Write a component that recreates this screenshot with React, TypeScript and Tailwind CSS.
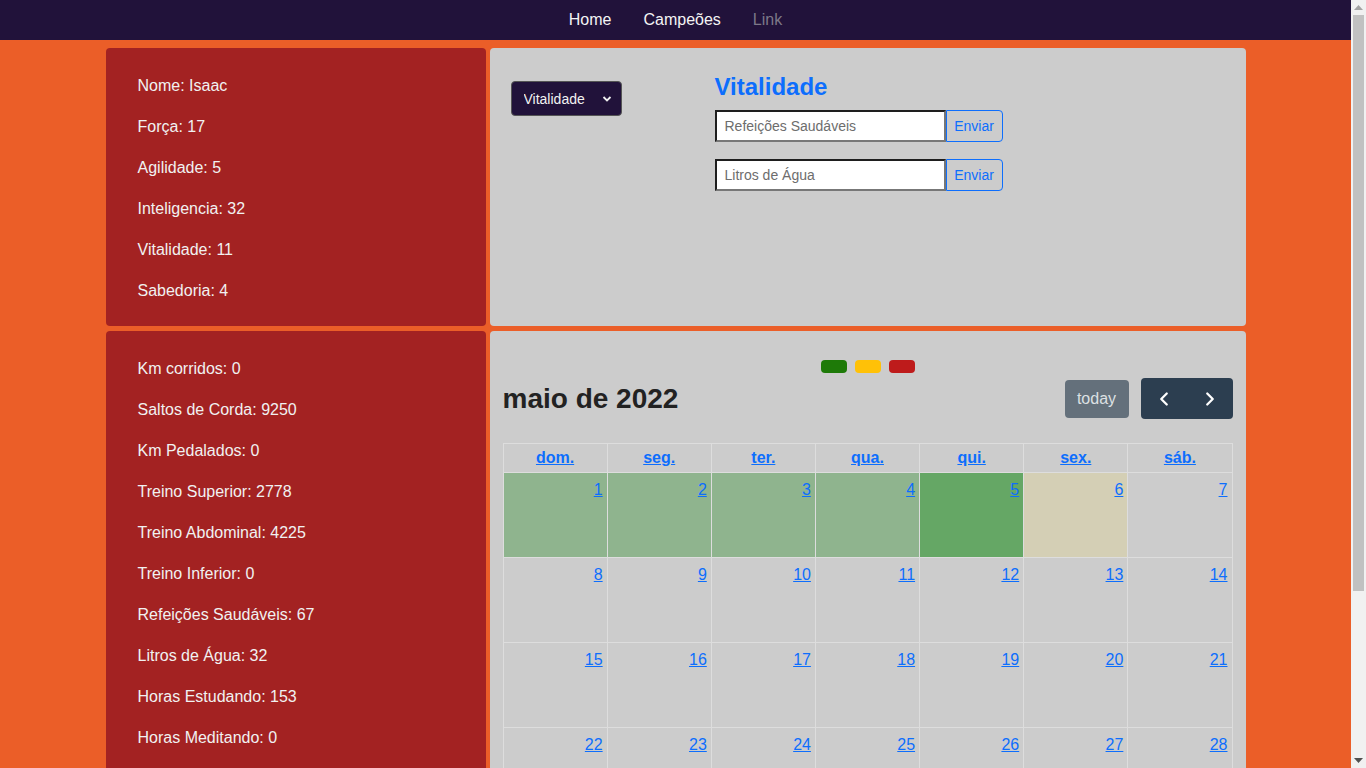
import { ChevronLeft, ChevronRight } from "lucide-react";

const atributos = [
  "Nome: Isaac",
  "Força: 17",
  "Agilidade: 5",
  "Inteligencia: 32",
  "Vitalidade: 11",
  "Sabedoria: 4",
];

const atividades = [
  "Km corridos: 0",
  "Saltos de Corda: 9250",
  "Km Pedalados: 0",
  "Treino Superior: 2778",
  "Treino Abdominal: 4225",
  "Treino Inferior: 0",
  "Refeições Saudáveis: 67",
  "Litros de Água: 32",
  "Horas Estudando: 153",
  "Horas Meditando: 0",
];

const diasSemana = ["dom.", "seg.", "ter.", "qua.", "qui.", "sex.", "sáb."];

// background of each day cell (only the first week has data)
const corDia = (dia: number) => {
  if (dia >= 1 && dia <= 4) return "bg-[#8fb48e]";
  if (dia === 5) return "bg-[#65a765]";
  if (dia === 6) return "bg-[#d4cfb5]";
  return "";
};

const semanas = [
  [1, 2, 3, 4, 5, 6, 7],
  [8, 9, 10, 11, 12, 13, 14],
  [15, 16, 17, 18, 19, 20, 21],
  [22, 23, 24, 25, 26, 27, 28],
  [29, 30, 31, 0, 0, 0, 0],
];

const Formulario = ({ placeholder }: { placeholder: string }) => (
  <div className="flex">
    <input
      className="w-[231px] h-[32px] bg-white border-2 border-t-[#1e1e1e] border-l-[#1e1e1e] border-b-[#777] border-r-[#777] px-[8px] text-[14px] text-black placeholder:text-[#6d6d6d] outline-none"
      placeholder={placeholder}
    />
    <button className="w-[57px] h-[32px] border border-[#0d6efd] rounded-r-[4px] text-[14px] text-[#0d6efd]">
      Enviar
    </button>
  </div>
);

const BarraRolagem = () => (
  <div className="fixed top-0 right-0 w-[15px] h-screen bg-[#f1f1f1] flex flex-col items-center">
    <svg className="mt-[5px]" width="9" height="5" viewBox="0 0 9 5">
      <path d="M0 5 L4.5 0 L9 5 Z" fill="#a3a3a3" />
    </svg>
    <div className="mt-[5px] w-[11px] h-[576px] bg-[#c1c1c1]" />
    <div className="flex-1" />
    <svg className="mb-[5px]" width="9" height="5" viewBox="0 0 9 5">
      <path d="M0 0 L9 0 L4.5 5 Z" fill="#505050" />
    </svg>
  </div>
);

export default function App() {
  return (
    <div className="min-h-screen bg-[#eb5e28] font-['Liberation_Sans',Arial,sans-serif] text-[16px]">
      <div className="w-[1351px]">
        <nav className="h-10 bg-[#21123a] flex justify-center items-center gap-8">
          <a className="text-[#f4f4f4]">Home</a>
          <a className="text-[#f4f4f4]">Campeões</a>
          <a className="text-[#7d7888]">Link</a>
        </nav>

        <div className="w-[1140px] mx-auto pt-2 flex flex-col gap-[5px]">
          <div className="flex gap-1 h-[278px]">
            <div className="w-[380px] bg-[#a32222] rounded-[4px] pt-[25px] px-8 text-[#f1f1f1]">
              {atributos.map((a) => (
                <p key={a} className="leading-[25px] mb-4">
                  {a}
                </p>
              ))}
            </div>

            <div className="flex-1 bg-[#cccccc] rounded-[4px] flex">
              <div className="w-[225px] pl-[21px] pt-[33px]">
                <div className="relative w-[111px]">
                  <select className="appearance-none w-[111px] h-[35px] bg-[#21123a] text-[#f1f1f1] text-[14px] pl-[12px] pt-[2px] rounded-[4px] border border-[#555] outline-none">
                    <option>Vitalidade</option>
                  </select>
                  <svg
                    className="absolute right-[10px] top-[14px] pointer-events-none"
                    width="10"
                    height="8"
                    viewBox="0 0 10 8"
                  >
                    <path d="M1.5 2 L5 5.5 L8.5 2" stroke="#f1f1f1" strokeWidth="1.8" fill="none" />
                  </svg>
                </div>
              </div>
              <div className="pt-[24px]">
                <h2 className="text-[24px] leading-[29px] font-bold text-[#0d6efd] mb-[9px]">Vitalidade</h2>
                <div className="flex flex-col gap-[17px]">
                  <Formulario placeholder="Refeições Saudáveis" />
                  <Formulario placeholder="Litros de Água" />
                </div>
              </div>
            </div>
          </div>

          <div className="flex gap-1 pb-4">
            <div className="w-[380px] bg-[#a32222] rounded-[4px] pt-[25px] pb-2 px-8 text-[#f1f1f1]">
              {atividades.map((a) => (
                <p key={a} className="leading-[25px] mb-4">
                  {a}
                </p>
              ))}
            </div>

            <div className="flex-1 bg-[#cccccc] rounded-[4px] px-[13px] pt-[29px] pb-4">
              <div className="flex justify-center gap-2">
                <span className="w-[26px] h-[13px] rounded-[4px] bg-[#1e7a08]" />
                <span className="w-[26px] h-[13px] rounded-[4px] bg-[#ffc107]" />
                <span className="w-[26px] h-[13px] rounded-[4px] bg-[#be1b1b]" />
              </div>

              <div className="flex justify-between items-center mt-[5px] mb-[24px]">
                <h2 className="text-[28px] font-bold text-[#222] leading-[34px]">maio de 2022</h2>
                <div className="flex items-center gap-3">
                  <button className="w-[64px] h-[38px] rounded-[4px] bg-[#64707b] text-[#dde0e3]">today</button>
                  <div className="flex h-[41px] rounded-[4px] bg-[#2c3e50] text-white">
                    <button className="w-[46px] flex items-center justify-center">
                      <ChevronLeft size={22} strokeWidth={2.5} />
                    </button>
                    <button className="w-[46px] flex items-center justify-center">
                      <ChevronRight size={22} strokeWidth={2.5} />
                    </button>
                  </div>
                </div>
              </div>

              <table className="w-full border-collapse table-fixed">
                <thead>
                  <tr>
                    {diasSemana.map((d) => (
                      <th key={d} className="border border-[#dddddd] h-[29px] font-bold">
                        <a className="text-[#0d6efd] underline">{d}</a>
                      </th>
                    ))}
                  </tr>
                </thead>
                <tbody>
                  {semanas.map((semana, i) => (
                    <tr key={i}>
                      {semana.map((dia, j) => (
                        <td
                          key={j}
                          className={`border border-[#dddddd] h-[85px] align-top p-0 ${corDia(dia)}`}
                        >
                          {dia > 0 && (
                            <div className="flex justify-end pr-1 pt-[5px]">
                              <a className="text-[#0d6efd] underline leading-[24px]">{dia}</a>
                            </div>
                          )}
                        </td>
                      ))}
                    </tr>
                  ))}
                </tbody>
              </table>
            </div>
          </div>
        </div>
      </div>
      <BarraRolagem />
    </div>
  );
}
